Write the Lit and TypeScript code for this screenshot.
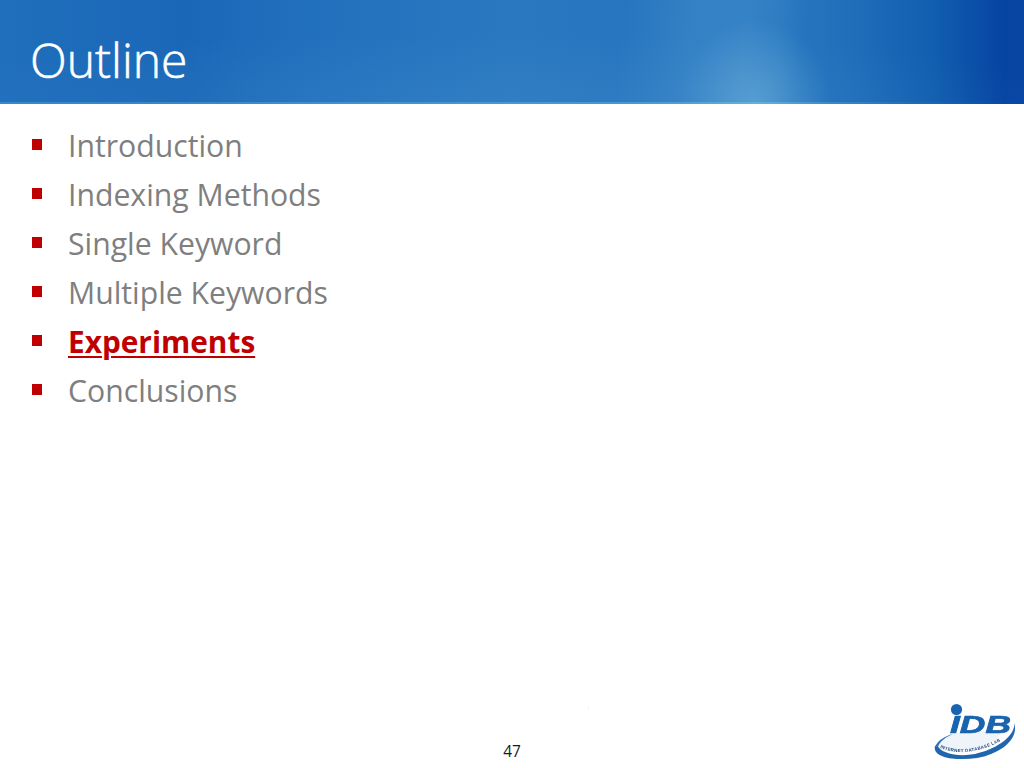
import { LitElement, html, css } from "lit";
import { customElement } from "lit/decorators.js";

const ITEMS = ["Introduction", "Indexing Methods", "Single Keyword", "Multiple Keywords", "Experiments", "Conclusions"];

@customElement("app-root")
export class AppRoot extends LitElement {
  static styles = css`
    :host { display: block; width: 1024px; height: 768px; background: #fff; position: relative; overflow: hidden; font-family: "Open Sans", "Noto Sans", sans-serif; }
    .band {
      height: 104px; box-sizing: border-box; padding: 27px 0 0 30px; position: relative;
      background:
        linear-gradient(90deg, rgba(150,215,235,.22) 0, rgba(150,215,235,.3) 75%, rgba(150,215,235,.05) 90%, rgba(150,215,235,0) 100%) 0 100% / 100% 2px no-repeat,
        radial-gradient(ellipse 75px 85px at 755px 104px, rgba(130,195,225,.42), rgba(130,195,225,0) 100%),
        linear-gradient(97deg, rgba(90,160,215,0) 620px, rgba(90,160,215,.26) 690px, rgba(90,160,215,.26) 745px, rgba(90,160,215,0) 800px),
        radial-gradient(ellipse 620px 70px at 480px 104px, rgba(80,150,210,.2), rgba(80,150,210,0) 100%),
        linear-gradient(90deg, #1f6fbc 0%, #1a67b7 18%, #2170bd 30%, #2a78c0 50%, #2775bf 62%, #2a78c0 76%, #1f6cb9 84%, #125eb0 91%, #0644a2 98%, #0845a3 100%);
    }
    h1 { margin: 0; font-weight: 300; font-size: 48px; line-height: 66px; color: #fff; -webkit-text-stroke: .55px #fff; }
    ul { list-style: none; margin: 0; padding: 17px 0 0 32px; display: flex; flex-direction: column; }
    li { display: flex; align-items: flex-start; height: 49px; font-size: 30.2px; line-height: 49px; color: #7f7f7f; }
    .sq { width: 10px; height: 11px; background: #c00000; margin: 18px 26px 0 0; flex: none; }
    li.on { color: #c00000; font-weight: 700; font-size: 29.8px; text-decoration: underline; text-underline-offset: 3px; text-decoration-thickness: 2px; }
    .page { position: absolute; left: 0; right: 0; top: 741px; text-align: center; font-size: 15.5px; line-height: 21px; color: #1a1a1a; }
    .speck { position: absolute; left: 588px; top: 707px; width: 1px; height: 3px; background: #f1f1f1; }
    .logo { position: absolute; left: 933px; top: 700px; width: 84px; height: 60px; filter: blur(.35px); }
  `;
  render() {
    return html`
      <div class="band"><h1>Outline</h1></div>
      <ul>${ITEMS.map((t, i) => html`<li class=${i === 4 ? "on" : ""}><span class="sq"></span><span>${t}</span></li>`)}</ul>
      <div class="page">47</div>
      <div class="speck"></div>
      <svg class="logo" viewBox="0 0 84 60">
        <defs><path id="c" d="M7 47.5 C 24 56 50 53 74 37"/></defs>
        <path d="M3 47 C 6 40 14 36 24 33 L 70 29 C 66 42 44 52 26 52 C 14 52 8 50 3 47 Z" fill="#eef4f9"/>
        <path d="M2 46 C -1 58 24 61 44 58 C 66 54 87 40 81 22 C 84 36 62 50 42 54 C 26 57 8 54 4 45 Z" fill="#2066ae"/>
        <path d="M2 47 C 5 40 12 36 20 34 C 13 37 7 41 5 47 Z" fill="#2e74b5"/>
        <circle cx="23.5" cy="9.5" r="5.6" fill="#1a63ae"/>
        <text x="17" y="33" font-family="Liberation Sans" font-style="italic" font-weight="700" font-size="24" fill="#1a63ae" stroke="#1a63ae" stroke-width=".7" textLength="61" lengthAdjust="spacingAndGlyphs">IDB</text>
        <text font-family="Liberation Sans" font-weight="700" font-size="4.4" fill="#244a78" letter-spacing=".3"><textPath href="#c">INTERNET DATABASE LAB</textPath></text>
      </svg>
    `;
  }
}
